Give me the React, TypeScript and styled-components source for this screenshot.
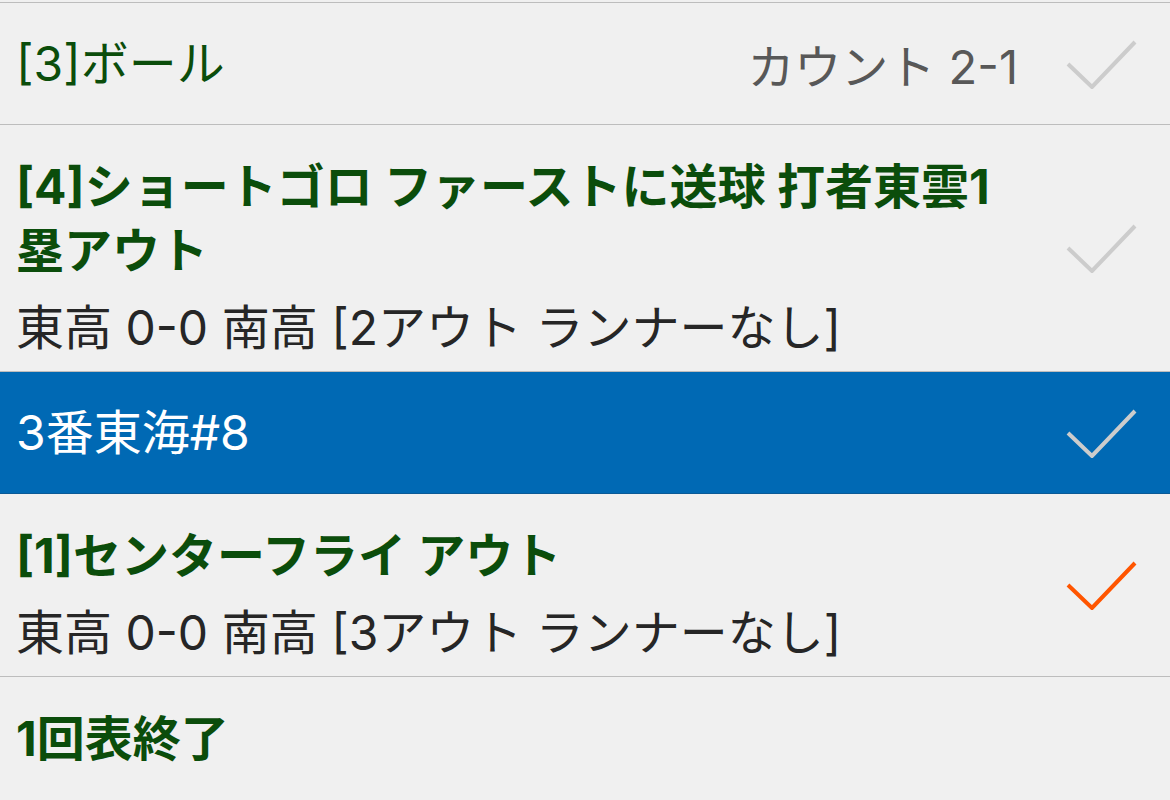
import React from 'react';
import styled, { createGlobalStyle } from 'styled-components';

const GlobalStyle = createGlobalStyle`
  html, body {
    margin: 0;
    padding: 0;
    background: #f0f0f0;
  }
  body {
    font-family: Inter, "Noto Sans CJK JP", sans-serif;
    -webkit-font-smoothing: antialiased;
  }
`;

const List = styled.ul`
  list-style: none;
  margin: 2px 0 0;
  padding: 0;
  border-top: 1px solid #bdbdbd;
`;

const Row = styled.li<{ $selected?: boolean }>`
  display: flex;
  align-items: center;
  padding: 0 32px 0 16px;
  background: ${(p) => (p.$selected ? '#0069b4' : 'transparent')};
  border-bottom: 1px solid ${(p) => (p.$selected ? '#0a5a96' : '#bdbdbd')};
`;

const Body = styled.div<{ $multi?: boolean }>`
  flex: 1;
  min-width: 0;
  padding: ${(p) => (p.$multi ? '30px 24px 12px 0' : '30px 0 29px')};
`;

const Title = styled.div<{ $bold?: boolean; $light?: boolean }>`
  font-size: 48px;
  line-height: ${(p) => (p.$bold ? '64px' : '62px')};
  font-weight: ${(p) => (p.$bold ? 700 : 400)};
  color: ${(p) => (p.$light ? '#ffffff' : '#0b4d0b')};
`;

const Sub = styled.div`
  margin-top: 14px;
  font-size: 48px;
  line-height: 62px;
  color: #262626;
`;

const Aside = styled.div`
  font-size: 47px;
  color: #585858;
  white-space: nowrap;
`;

const CheckBox = styled.svg`
  flex: none;
  margin-left: 48px;
`;

type Item = {
  title: string;
  sub?: string;
  aside?: string;
  bold?: boolean;
  selected?: boolean;
  check: string;
};

const items: Item[] = [
  { title: '[3]ボール', aside: 'カウント 2-1', check: '#cccccc' },
  {
    title: '[4]ショートゴロ ファーストに送球 打者東雲1塁アウト',
    sub: '東高 0-0 南高 [2アウト ランナーなし]',
    bold: true,
    check: '#cccccc'
  },
  { title: '3番東海#8', selected: true, check: '#cccccc' },
  {
    title: '[1]センターフライ アウト',
    sub: '東高 0-0 南高 [3アウト ランナーなし]',
    bold: true,
    check: '#ff5500'
  },
  { title: '1回表終了', bold: true, check: 'none' }
];

const Check = ({ color }: { color: string }) => (
  <CheckBox width="72" height="50" viewBox="0 0 72 50">
    {color !== 'none' && (
      <polyline
        points="2,25 26,48 69,3"
        fill="none"
        stroke={color}
        strokeWidth="4"
      />
    )}
  </CheckBox>
);

export default function App() {
  return (
    <>
      <GlobalStyle />
      <List>
        {items.map((item, i) => (
          <Row key={i} $selected={item.selected}>
            <Body $multi={!!item.sub}>
              <Title $bold={item.bold} $light={item.selected}>
                {item.title}
              </Title>
              {item.sub && <Sub>{item.sub}</Sub>}
            </Body>
            {item.aside && <Aside>{item.aside}</Aside>}
            <Check color={item.check} />
          </Row>
        ))}
      </List>
    </>
  );
}
